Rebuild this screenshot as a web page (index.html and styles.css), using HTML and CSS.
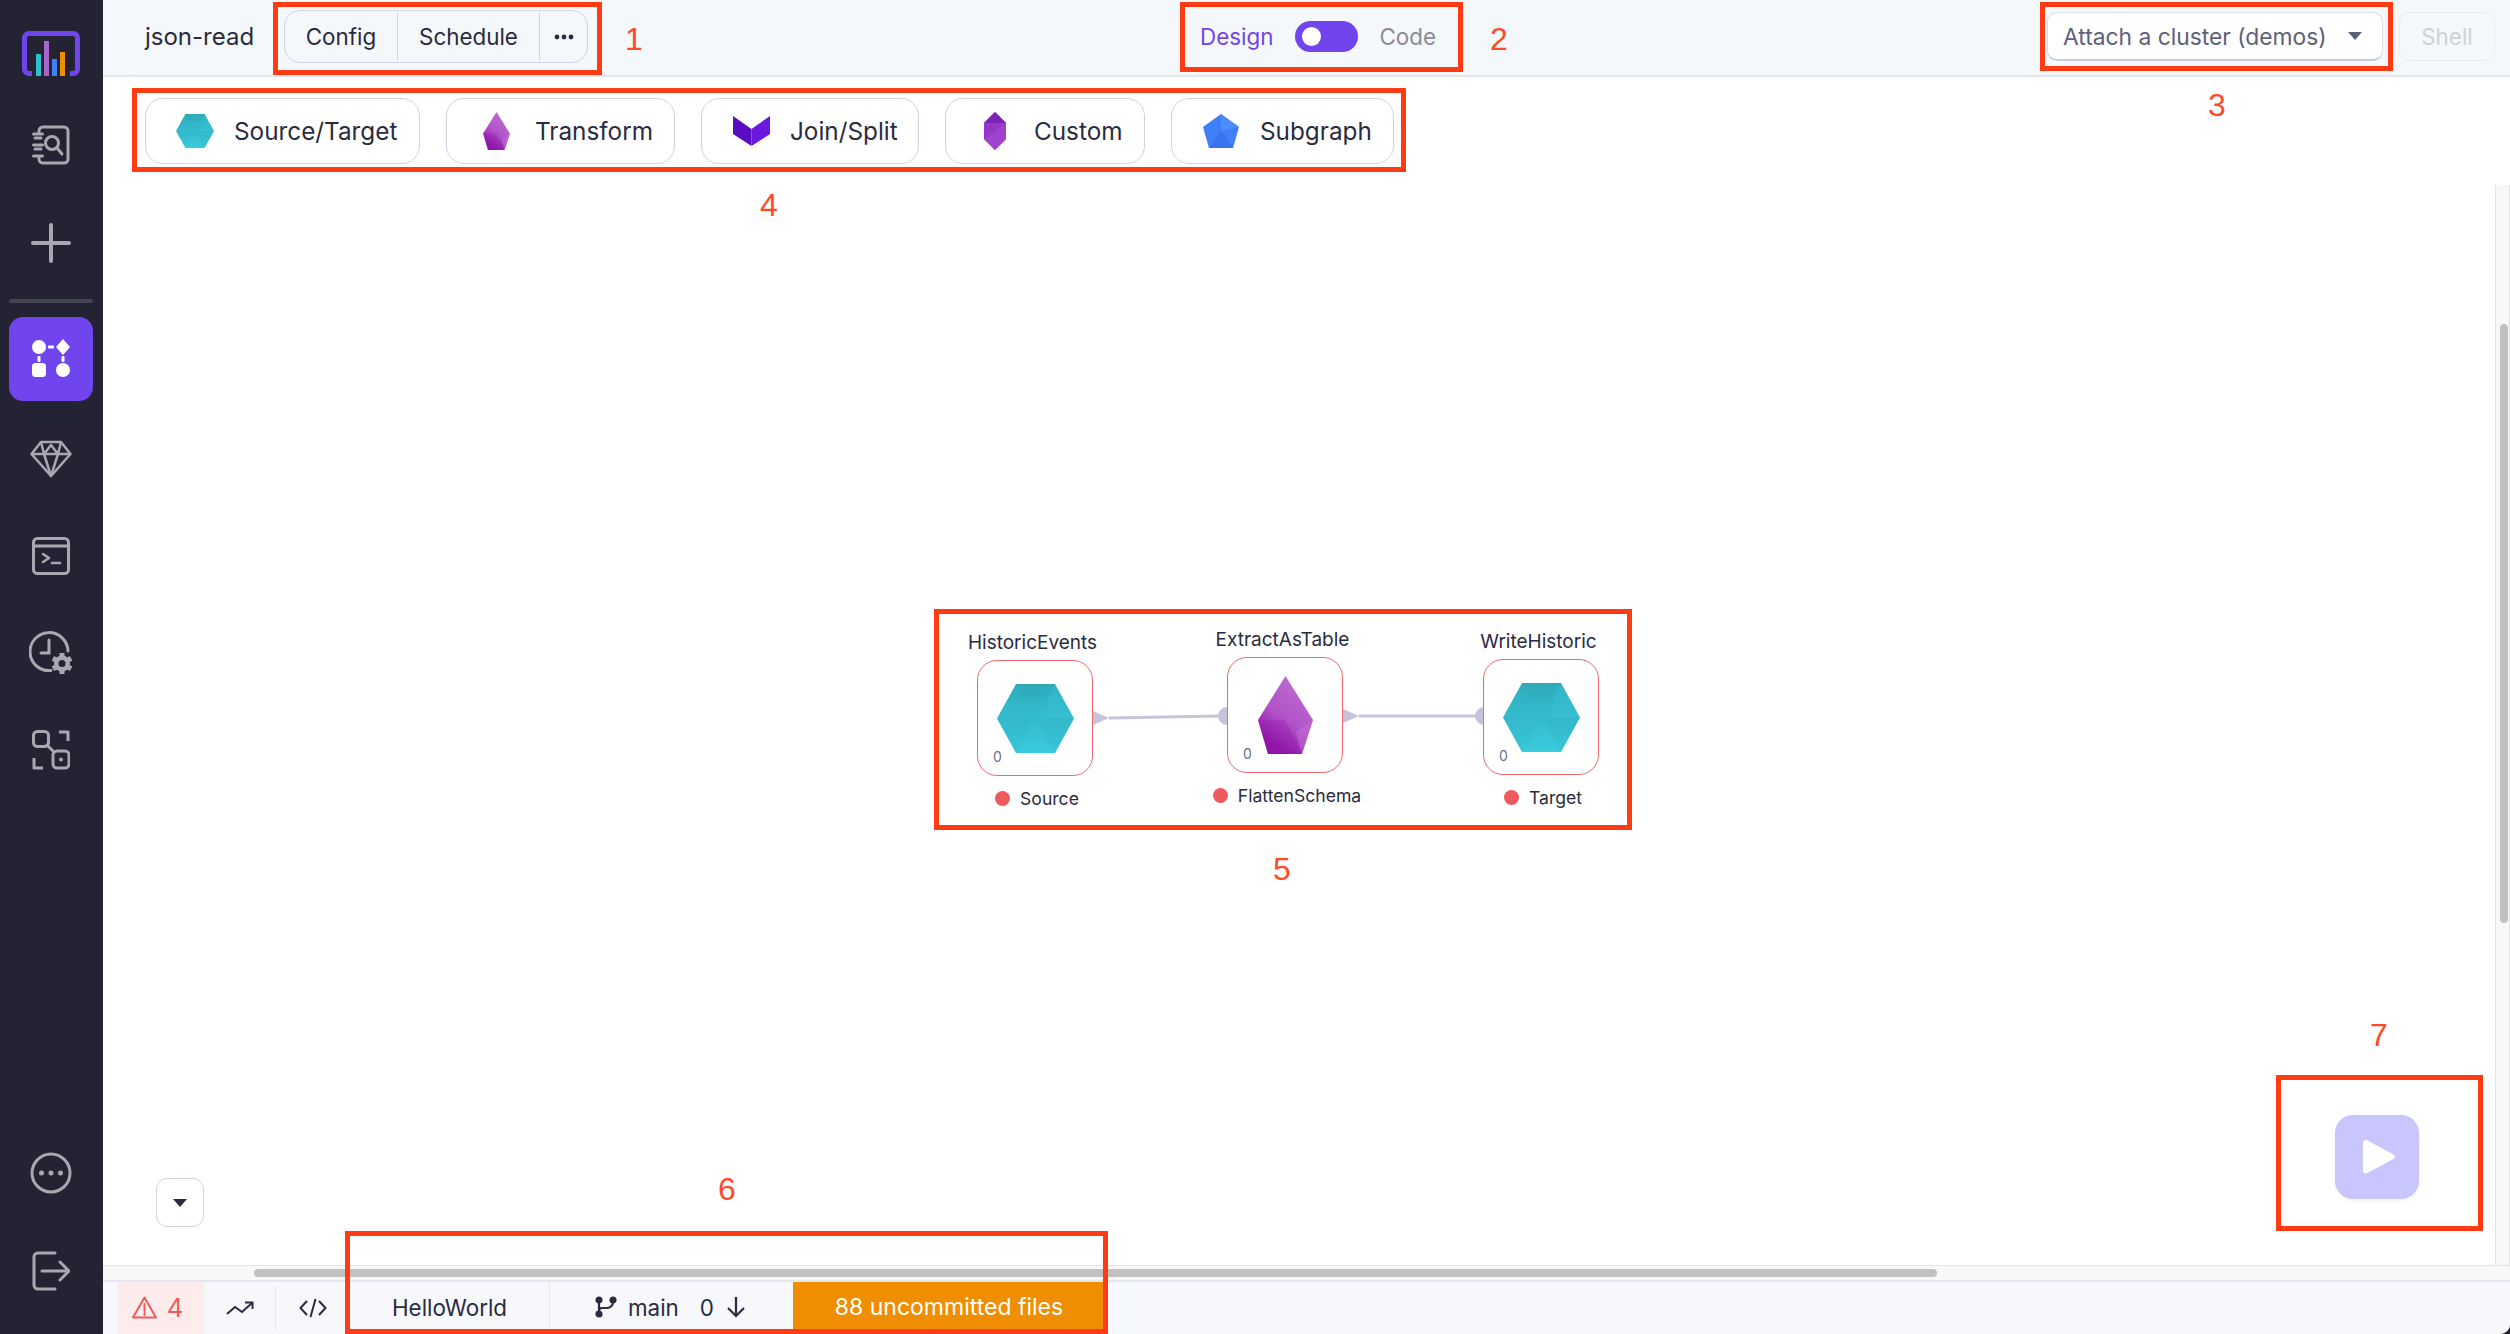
FILE: index.html
```html
<!DOCTYPE html>
<html lang="en">
<head>
    <meta charset="UTF-8">
    <title>json-read</title>
    <link rel="stylesheet" href="styles.css">
</head>
<body>
    <!-- shared gradients and gem shapes -->
    <svg class="defs" width="0" height="0">
        <defs>
            <linearGradient id="hexFill" x1="0" y1="0" x2="0" y2="1">
                <stop offset="0" stop-color="#2fadbd"/>
                <stop offset="1" stop-color="#3acbde"/>
            </linearGradient>
            <linearGradient id="gemFill" x1="0.7" y1="0.1" x2="0.3" y2="0.9">
                <stop offset="0" stop-color="#bb69d0"/>
                <stop offset="0.55" stop-color="#b153c8"/>
                <stop offset="1" stop-color="#9015a8"/>
            </linearGradient>
            <symbol id="hex" viewBox="0 0 77 69">
                <polygon points="0,34.5 19,0 58,0 77,34.5 58,69 19,69" fill="url(#hexFill)"/>
                <polygon points="19,0 58,0 45,14 26,14" fill="#2aa5b4" opacity="0.25"/>
                <polygon points="52,12 58,0 77,34.5 48,34.5" fill="#3ccbdc" opacity="0.25"/>
                <polygon points="0,34.5 38,34.5 19,69" fill="#2ea9b9" opacity="0.15"/>
                <polygon points="38,34.5 77,34.5 58,69" fill="#2fa9b9" opacity="0.2"/>
            </symbol>
            <symbol id="gem" viewBox="0 0 55 78">
                <polygon points="27.5,0 55,44 44,78 10,78 0,44" fill="url(#gemFill)"/>
                <polygon points="0,44 27,44 44,78 10,78" fill="#9317a9" opacity="0.3"/>
                <polygon points="55,44 44,78 38,56" fill="#c36fd6" opacity="0.5"/>
            </symbol>
            <symbol id="vee" viewBox="0 0 37 30">
                <polygon points="0,0 18.5,13 18.5,30 0,18" fill="#5a0cc2"/>
                <polygon points="37,0 18.5,13 18.5,30 37,18" fill="#6c18dc"/>
            </symbol>
            <symbol id="custom" viewBox="0 0 22 38">
                <polygon points="11,0 22,11 22,27 11,38 0,27 0,11" fill="#9337c6"/>
                <polygon points="11,0 22,11 0,11" fill="#7d22b3"/>
                <polygon points="0,27 22,11 22,27 11,38" fill="#a041d0"/>
            </symbol>
            <symbol id="pentagon" viewBox="0 0 36 34">
                <polygon points="18,0 36,13 30,34 6,34 0,13" fill="#3f80f8"/>
                <polygon points="18,0 36,13 18,17" fill="#4d8cfa"/>
                <polygon points="6,34 18,17 30,34" fill="#3874f0"/>
            </symbol>
        </defs>
    </svg>

    <aside class="sidebar">
        <div class="logo">
            <svg width="58" height="45" viewBox="0 0 58 45" fill="none">
                <path d="M10 42.500H7a4.500 4.500 0 0 1-4.500-4.500V7A4.500 4.500 0 0 1 7 2.500h44A4.500 4.500 0 0 1 55.500 7v31a4.500 4.500 0 0 1-4.500 4.500h-3" stroke="#7145ee" stroke-width="5"/>
                <rect x="14" y="23" width="5" height="22" fill="#2fc0ce"/>
                <rect x="22" y="10" width="5" height="35" fill="#a864cf"/>
                <rect x="30" y="28" width="5" height="17" fill="#3e80f5"/>
                <rect x="38" y="21" width="5" height="24" fill="#ee8e00"/>
            </svg>
        </div>
        <div class="nav-item">
            <svg width="38" height="40" viewBox="0 0 38 40" fill="none" stroke="#a9a8b0" stroke-width="3" stroke-linecap="round">
                <path d="M7 8V6a4 4 0 0 1 4-4h21a4 4 0 0 1 4 4v28a4 4 0 0 1-4 4H11a4 4 0 0 1-4-4v-1"/>
                <path d="M1.500 9h9M1.500 20h9M1.500 31h9M3 13h6M3 24h6"/>
                <circle cx="20" cy="18" r="6.500"/>
                <path d="M25 23l5 6"/>
            </svg>
        </div>
        <div class="nav-item">
            <svg width="40" height="40" viewBox="0 0 40 40" stroke="#a9a8b0" stroke-width="4" stroke-linecap="round">
                <path d="M20 2v36M2 20h36"/>
            </svg>
        </div>
        <div class="nav-divider"></div>
        <div class="nav-active">
            <svg width="40" height="40" viewBox="0 0 40 40" fill="#fff">
                <circle cx="8" cy="8" r="7"/>
                <polygon points="32,0 39,8 32,16 25,8"/>
                <rect x="1" y="24" width="14" height="14" rx="3.500"/>
                <circle cx="32" cy="31" r="7"/>
                <rect x="17" y="6.500" width="6" height="3" rx="1"/>
                <rect x="6.500" y="17" width="3" height="6" rx="1"/>
                <rect x="30.500" y="17" width="3" height="6" rx="1"/>
            </svg>
        </div>
        <div class="nav-group">
            <div class="nav-item">
                <svg width="42" height="38" viewBox="0 0 42 38" fill="none" stroke="#a9a8b0" stroke-width="2.500" stroke-linejoin="round">
                    <path d="M11 2h20l9.500 12L21 36 1.500 14z"/>
                    <path d="M1.500 14h39M14 14l7 22 7-22M11 2l3 12 7-9 7 9 3-12"/>
                </svg>
            </div>
            <div class="nav-item">
                <svg width="38" height="38" viewBox="0 0 38 38" fill="none" stroke="#a9a8b0" stroke-width="3" stroke-linecap="round" stroke-linejoin="round">
                    <rect x="1.500" y="1.500" width="35" height="35" rx="4"/>
                    <path d="M2 9h34"/>
                    <path d="M11 17l6 4-6 4" stroke-width="2.500"/>
                    <path d="M20 26h8" stroke-width="2.500"/>
                </svg>
            </div>
            <div class="nav-item">
                <svg width="44" height="44" viewBox="0 0 44 44" fill="none" stroke="#a9a8b0" stroke-width="3" stroke-linecap="round">
                    <path d="M22 39.500A19 19 0 1 1 39 20"/>
                    <path d="M20 9v13h-8"/>
                    <g fill="#a9a8b0" stroke="none" transform="translate(33 32.500)">
                        <circle r="8"/>
                        <rect x="-2.500" y="-10.500" width="5" height="21"/>
                        <rect x="-2.500" y="-10.500" width="5" height="21" transform="rotate(60)"/>
                        <rect x="-2.500" y="-10.500" width="5" height="21" transform="rotate(120)"/>
                    </g>
                    <circle cx="33" cy="32.500" r="3.500" fill="#242333" stroke="none"/>
                </svg>
            </div>
            <div class="nav-item">
                <svg width="38" height="40" viewBox="0 0 38 40" fill="none" stroke="#a9a8b0" stroke-width="3" stroke-linejoin="round">
                    <rect x="1.500" y="1.500" width="15" height="15" rx="4"/>
                    <rect x="21" y="21" width="16" height="17" rx="4"/>
                    <path d="M14 14l9 9"/>
                    <path d="M27 2h9v9M2 28v10h9"/>
                    <circle cx="29" cy="29.500" r="2" fill="#a9a8b0" stroke="none"/>
                </svg>
            </div>
        </div>
        <div class="nav-bottom">
            <div class="nav-item">
                <svg width="42" height="42" viewBox="0 0 42 42" fill="none" stroke="#a9a8b0" stroke-width="3">
                    <circle cx="21" cy="21" r="19"/>
                    <circle cx="11.500" cy="21" r="2.500" fill="#a9a8b0" stroke="none"/>
                    <circle cx="21" cy="21" r="2.500" fill="#a9a8b0" stroke="none"/>
                    <circle cx="30.500" cy="21" r="2.500" fill="#a9a8b0" stroke="none"/>
                </svg>
            </div>
            <div class="nav-item">
                <svg width="38" height="40" viewBox="0 0 38 40" fill="none" stroke="#a9a8b0" stroke-width="3" stroke-linecap="round" stroke-linejoin="round">
                    <path d="M23 2H6a4 4 0 0 0-4 4v28a4 4 0 0 0 4 4h17"/>
                    <path d="M10 20h26M28 11l9 9-9 9"/>
                </svg>
            </div>
        </div>
    </aside>

    <div class="main">
        <header class="topbar">
            <span class="pipeline-name">json-read</span>
            <div class="tabs">
                <span class="tab tab-config">Config</span>
                <span class="tab tab-schedule">Schedule</span>
                <span class="tab tab-more">
                    <svg width="20" height="6" viewBox="0 0 20 6" fill="#2a2b40">
                        <circle cx="3" cy="3" r="2.400"/><circle cx="10" cy="3" r="2.400"/><circle cx="17" cy="3" r="2.400"/>
                    </svg>
                </span>
            </div>
            <div class="mode-switch">
                <span class="mode-design">Design</span>
                <span class="toggle"><span class="knob"></span></span>
                <span class="mode-code">Code</span>
            </div>
            <div class="topbar-right">
                <div class="cluster-select">
                    <span>Attach a cluster (demos)</span>
                    <span class="caret"></span>
                </div>
                <div class="shell-btn">Shell</div>
            </div>
        </header>

        <div class="workspace">
            <div class="canvas">
                <div class="palette">
                    <button class="gem-btn btn-source"><span class="gem-icon"><svg width="38" height="34"><use href="#hex"/></svg></span>Source/Target</button>
                    <button class="gem-btn btn-transform"><span class="gem-icon"><svg width="27" height="38"><use href="#gem"/></svg></span>Transform</button>
                    <button class="gem-btn btn-join"><span class="gem-icon"><svg width="37" height="30"><use href="#vee"/></svg></span>Join/Split</button>
                    <button class="gem-btn btn-custom"><span class="gem-icon"><svg width="22" height="38"><use href="#custom"/></svg></span>Custom</button>
                    <button class="gem-btn btn-subgraph"><span class="gem-icon"><svg width="36" height="34"><use href="#pentagon"/></svg></span>Subgraph</button>
                </div>

                <svg class="edges" width="2392" height="1189" fill="#c6c4dc" stroke="#c6c4dc">
                    <polygon points="990,635 1006,642 990,649" stroke="none"/>
                    <line x1="1006" y1="642" x2="1117" y2="640" stroke-width="3"/>
                    <circle cx="1124" cy="640" r="9" stroke="none"/>
                    <polygon points="1240,633 1256,640 1240,647" stroke="none"/>
                    <line x1="1256" y1="640" x2="1381" y2="640" stroke-width="3"/>
                    <circle cx="1381" cy="640" r="9" stroke="none"/>
                </svg>

                <div class="node node-source">
                    <div class="node-title">HistoricEvents</div>
                    <div class="node-box">
                        <svg width="77" height="69"><use href="#hex"/></svg>
                        <span class="node-count">0</span>
                    </div>
                    <div class="node-status"><span class="dot"></span>Source</div>
                </div>
                <div class="node node-transform">
                    <div class="node-title">ExtractAsTable</div>
                    <div class="node-box">
                        <svg width="55" height="78"><use href="#gem"/></svg>
                        <span class="node-count">0</span>
                    </div>
                    <div class="node-status"><span class="dot"></span>FlattenSchema</div>
                </div>
                <div class="node node-target">
                    <div class="node-title">WriteHistoric</div>
                    <div class="node-box">
                        <svg width="77" height="69"><use href="#hex"/></svg>
                        <span class="node-count">0</span>
                    </div>
                    <div class="node-status"><span class="dot"></span>Target</div>
                </div>

                <button class="collapse-btn"><span class="collapse-arrow"></span></button>
                <button class="run-btn">
                    <svg width="36" height="36" viewBox="0 0 36 36" fill="#fff">
                        <path d="M2 4c0-2.500 2.500-3.500 4.500-2.500l26 14c2 1 2 3.500 0 4.500l-26 14C4.500 35 2 34 2 31.500z"/>
                    </svg>
                </button>
            </div>
            <div class="vscroll"><div class="vscroll-thumb"></div></div>
        </div>

        <div class="hscroll"><div class="hscroll-thumb"></div></div>

        <footer class="statusbar">
            <div class="status-alert">
                <svg width="25" height="23" viewBox="0 0 25 23" fill="none" stroke="#ef5a5f" stroke-width="2" stroke-linejoin="round">
                    <path d="M12.500 1.500L24 21.500H1z"/>
                    <path d="M12.500 8v7M12.500 17v2" stroke-linecap="round"/>
                </svg>
                <span>4</span>
            </div>
            <div class="status-icon status-trend">
                <svg width="28" height="14" viewBox="0 0 28 14" fill="none" stroke="#2a2b40" stroke-width="2">
                    <path d="M1 13l8-7 7 5L26 2"/>
                    <path d="M19 1.500h7.500V8"/>
                </svg>
            </div>
            <div class="status-icon status-code">
                <svg width="28" height="20" viewBox="0 0 28 20" fill="none" stroke="#2a2b40" stroke-width="2">
                    <path d="M8 3L1.500 10 8 17M20 3l6.500 7L20 17M16.500 1l-5 18"/>
                </svg>
            </div>
            <div class="status-project">HelloWorld</div>
            <div class="status-branch">
                <svg width="22" height="22" viewBox="0 0 22 22" fill="none" stroke="#2a2b40" stroke-width="2.200">
                    <circle cx="4" cy="4" r="2.500" fill="#2a2b40"/>
                    <circle cx="18" cy="4" r="2.500" fill="#2a2b40"/>
                    <circle cx="4" cy="18" r="2.500" fill="#2a2b40"/>
                    <path d="M4 4v14M18 4v2a6 6 0 0 1-6 6H7a3 3 0 0 0-3 3"/>
                </svg>
                <span class="branch-name">main</span>
                <span class="branch-count">0</span>
                <svg width="20" height="22" viewBox="0 0 20 22" fill="none" stroke="#2a2b40" stroke-width="2.200">
                    <path d="M10 1v19M2 12l8 8 8-8"/>
                </svg>
            </div>
            <div class="status-commit">88 uncommitted files</div>
        </footer>
    </div>

    <!-- red call-outs drawn over the screenshot -->
    <div class="callout callout-1"></div>
    <div class="callout callout-2"></div>
    <div class="callout callout-3"></div>
    <div class="callout callout-4"></div>
    <div class="callout callout-5"></div>
    <div class="callout callout-6"></div>
    <div class="callout callout-7"></div>
    <span class="callout-num num-1">1</span>
    <span class="callout-num num-2">2</span>
    <span class="callout-num num-3">3</span>
    <span class="callout-num num-4">4</span>
    <span class="callout-num num-5">5</span>
    <span class="callout-num num-6">6</span>
    <span class="callout-num num-7">7</span>
</body>
</html>
```

FILE: styles.css
```css
* {
    box-sizing: border-box;
}
html, body {
    height: 100%;
}
body {
    margin: 0;
    display: flex;
    position: relative;
    overflow: hidden;
    background-color: #242333;
    color: #2a2b40;
    font-family: Inter, "Noto Sans", sans-serif;
    font-size: 22.4px;
}
button {
    font-family: inherit;
    cursor: pointer;
}
.defs {
    position: absolute;
}

/* left rail */
.sidebar {
    width: 103px;
    flex-shrink: 0;
    display: flex;
    flex-direction: column;
    align-items: center;
    background-color: #242333;
    padding: 0 2px 14px 0;
}
.logo {
    height: 45px;
    margin: 31px 0 20px;
}
.logo svg, .nav-item svg, .nav-active svg {
    display: block;
}
.nav-item {
    width: 84px;
    height: 98px;
    display: flex;
    align-items: center;
    justify-content: center;
}
.nav-divider {
    width: 84px;
    height: 4px;
    margin: 7px 0 14px;
    border-radius: 2px;
    background-color: #464552;
}
.nav-active {
    width: 84px;
    height: 84px;
    margin-bottom: 9px;
    display: flex;
    align-items: center;
    justify-content: center;
    border-radius: 14px;
    background-color: #7145ee;
}
.nav-group .nav-item {
    height: 97px;
}
.nav-bottom {
    margin-top: auto;
}

.main {
    flex: 1;
    min-width: 0;
    display: flex;
    flex-direction: column;
    background-color: #fff;
    border-bottom-right-radius: 10px;
    overflow: hidden;
}

/* top bar */
.topbar {
    height: 77px;
    flex-shrink: 0;
    display: flex;
    align-items: center;
    padding: 0 15px 2px 42px;
    background-color: #f5f8fb;
    border-bottom: 2px solid #e4e7ee;
}
.pipeline-name {
    width: 139px;
    font-size: 24px;
}
.tabs {
    width: 304px;
    height: 53px;
    display: flex;
    align-items: center;
    border: 1.500px solid #d3d3e3;
    border-radius: 16px;
}
.tab {
    height: 49px;
    display: flex;
    align-items: center;
    justify-content: center;
    border-right: 1.500px solid #d3d3e3;
}
.tab-config {
    width: 113px;
}
.tab-schedule {
    width: 142px;
}
.tab-more {
    flex: 1;
    border-right: none;
}
.mode-switch {
    display: flex;
    align-items: center;
    margin-left: 612px;
}
.mode-design {
    color: #7145ee;
}
.toggle {
    width: 63px;
    height: 31px;
    margin: 0 21px 0 22px;
    padding: 6px 0 0 7px;
    border-radius: 16px;
    background-color: #7145ee;
}
.knob {
    display: block;
    width: 19px;
    height: 19px;
    border-radius: 50%;
    background-color: #fff;
}
.mode-code {
    color: #8a8b96;
}
.topbar-right {
    display: flex;
    align-items: center;
    margin-left: auto;
}
.cluster-select {
    width: 336px;
    height: 49px;
    display: flex;
    align-items: center;
    justify-content: space-between;
    padding: 0 20px 0 15px;
    color: #5e6078;
    font-size: 22.800px;
    background-color: #fff;
    border: 1px solid #dcdce6;
    border-bottom: 2px solid #c9c9d8;
    border-radius: 10px;
}
.caret {
    width: 0;
    height: 0;
    border-left: 7px solid transparent;
    border-right: 7px solid transparent;
    border-top: 8px solid #5e6078;
}
.shell-btn {
    width: 96px;
    height: 49px;
    margin-left: 16px;
    display: flex;
    align-items: center;
    justify-content: center;
    color: #d0d1da;
    border: 1.500px solid #e8eaf0;
    border-radius: 10px;
}

/* canvas */
.workspace {
    flex: 1;
    min-height: 0;
    display: flex;
}
.canvas {
    flex: 1;
    position: relative;
    min-width: 0;
}
.palette {
    display: flex;
    gap: 26px;
    padding: 21px 0 0 42px;
}
.gem-btn {
    height: 66px;
    display: flex;
    align-items: center;
    padding: 0 0 0 30px;
    color: #2a2b40;
    font-size: 24.300px;
    background-color: #fff;
    border: 1.500px solid #d3d2e3;
    border-radius: 18px;
}
.btn-source {
    width: 275px;
}
.btn-transform {
    width: 229px;
}
.btn-join {
    width: 218px;
}
.btn-custom {
    width: 200px;
}
.btn-subgraph {
    width: 223px;
}
.gem-icon {
    width: 38px;
    margin-right: 20px;
    display: flex;
    justify-content: center;
}
.edges {
    position: absolute;
    left: 0;
    top: -1px;
}
.node {
    position: absolute;
    width: 220px;
    display: flex;
    flex-direction: column;
    align-items: center;
    font-size: 17.600px;
}
.node-source {
    left: 822px;
    top: 554px;
}
.node-transform {
    left: 1072px;
    top: 551px;
}
.node-target {
    left: 1328px;
    top: 553px;
}
.node-title {
    height: 24px;
    line-height: 24px;
    margin: 0 5px 5px 0;
    font-size: 19px;
}
.node-box {
    position: relative;
    width: 116px;
    height: 116px;
    display: flex;
    align-items: center;
    justify-content: center;
    background-color: #fff;
    border: 1.600px solid #f0686e;
    border-radius: 20px;
}
.node-count {
    position: absolute;
    left: 15px;
    bottom: 10px;
    color: #6c6e8e;
    font-size: 14px;
}
.node-status {
    height: 24px;
    display: flex;
    align-items: center;
    margin: 10px 0 0 4px;
}
.dot {
    width: 15px;
    height: 15px;
    margin-right: 10px;
    border-radius: 50%;
    background-color: #ef5a5f;
}
.collapse-btn {
    position: absolute;
    left: 53px;
    top: 1101px;
    width: 48px;
    height: 49px;
    padding: 0;
    display: flex;
    align-items: center;
    justify-content: center;
    background-color: #fff;
    border: 1.500px solid #d3d2e3;
    border-radius: 11px;
}
.collapse-arrow {
    border-left: 7px solid transparent;
    border-right: 7px solid transparent;
    border-top: 8px solid #2a2b40;
}
.run-btn {
    position: absolute;
    left: 2232px;
    top: 1038px;
    width: 84px;
    height: 84px;
    padding: 0 0 0 4px;
    display: flex;
    align-items: center;
    justify-content: center;
    background-color: #c9c5fd;
    border: none;
    border-radius: 18px;
    box-shadow: 0 2px 4px rgba(0, 0, 0, 0.05);
}

/* scrollbars */
.vscroll {
    width: 15px;
    flex-shrink: 0;
    margin-top: 108px;
    padding: 139px 3px 0 4px;
    background-color: #f8f8f8;
    border-left: 1px solid #e3e3e3;
    border-right: 1px solid #e3e3e3;
}
.vscroll-thumb {
    width: 8px;
    height: 599px;
    border-radius: 4px;
    background-color: #c1c1c1;
}
.hscroll {
    height: 15px;
    flex-shrink: 0;
    padding: 3px 0 0 151px;
    background-color: #f8f8f8;
    border-top: 1px solid #e3e3e3;
}
.hscroll-thumb {
    width: 1683px;
    height: 8px;
    border-radius: 4px;
    background-color: #c1c1c1;
}

/* status bar */
.statusbar {
    height: 54px;
    flex-shrink: 0;
    display: flex;
    padding-left: 14px;
    background-color: #f7f8fb;
    border-top: 2px solid #e5e6ef;
}
.status-alert {
    width: 87px;
    display: flex;
    align-items: center;
    justify-content: center;
    gap: 10px;
    padding: 0 6px 2px 0;
    color: #ef5a5f;
    font-size: 25.600px;
    background-color: #feeced;
}
.status-icon {
    display: flex;
    align-items: center;
    justify-content: center;
}
.status-trend {
    width: 72px;
    margin: 5px 0;
    border-right: 1.500px solid #e5e6ef;
}
.status-code {
    width: 74px;
}
.status-project {
    width: 199px;
    display: flex;
    align-items: center;
    justify-content: center;
    padding-bottom: 2px;
}
.status-branch {
    width: 244px;
    display: flex;
    align-items: center;
    justify-content: center;
    padding: 0 2px 2px 0;
    border-left: 1.500px solid #e5e6ef;
}
.branch-name {
    margin: 0 21px 0 11px;
}
.branch-count {
    margin-right: 12px;
}
.status-commit {
    width: 312px;
    display: flex;
    align-items: center;
    justify-content: center;
    padding-bottom: 2px;
    color: #fff;
    font-size: 23px;
    background-color: #ee8e00;
}

/* annotations */
.callout {
    position: absolute;
    border: 5px solid #ff3b14;
}
.callout-1 {
    left: 273px;
    top: 2px;
    width: 329px;
    height: 73px;
}
.callout-2 {
    left: 1180px;
    top: 2px;
    width: 283px;
    height: 70px;
}
.callout-3 {
    left: 2040px;
    top: 2px;
    width: 353px;
    height: 69px;
}
.callout-4 {
    left: 132px;
    top: 88px;
    width: 1274px;
    height: 84px;
}
.callout-5 {
    left: 934px;
    top: 609px;
    width: 698px;
    height: 221px;
}
.callout-6 {
    left: 345px;
    top: 1231px;
    width: 763px;
    height: 103px;
}
.callout-7 {
    left: 2276px;
    top: 1075px;
    width: 207px;
    height: 156px;
}
.callout-num {
    position: absolute;
    color: #ff4a2a;
    font-family: "Liberation Sans", Arial, sans-serif;
    font-size: 32px;
    line-height: 1;
}
.num-1 {
    left: 625px;
    top: 23px;
}
.num-2 {
    left: 1490px;
    top: 23px;
}
.num-3 {
    left: 2208px;
    top: 89px;
}
.num-4 {
    left: 760px;
    top: 189px;
}
.num-5 {
    left: 1273px;
    top: 853px;
}
.num-6 {
    left: 718px;
    top: 1173px;
}
.num-7 {
    left: 2370px;
    top: 1019px;
}
```
